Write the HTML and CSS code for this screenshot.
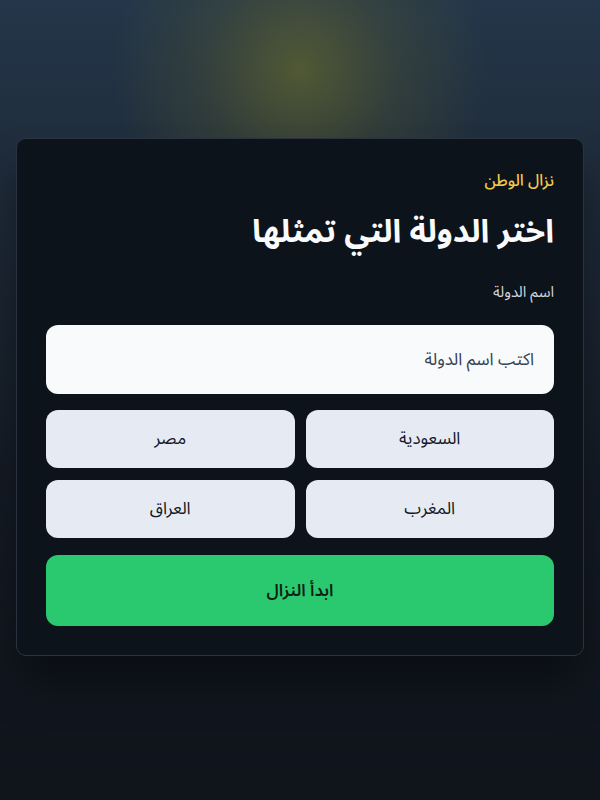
FILE: index.html
```html
<!DOCTYPE html>
<html lang="ar" dir="rtl">
<head>
  <meta charset="UTF-8">
  <title>نزال الوطن</title>
  <link rel="stylesheet" href="styles.css">
</head>
<body>
  <div class="glow"></div>

  <main class="card">
    <p class="eyebrow">نزال الوطن</p>
    <h1>اختر الدولة التي تمثلها</h1>

    <label for="country">اسم الدولة</label>
    <input type="text" id="country" placeholder="اكتب اسم الدولة">

    <div class="choices">
      <button class="choice">السعودية</button>
      <button class="choice">مصر</button>
      <button class="choice">المغرب</button>
      <button class="choice">العراق</button>
    </div>

    <button class="start">ابدأ النزال</button>
  </main>
</body>
</html>
```

FILE: styles.css
```css
* {
  box-sizing: border-box;
}

html {
  min-height: 100%;
  background: linear-gradient(180deg, #24364a 0%, #1e2a38 25%, #141b25 60%, #0f141b 100%);
}

body {
  font-family: "Noto Sans Arabic", "Noto Naskh Arabic", "Noto Sans", "DejaVu Sans", sans-serif;
  margin: 0;
  padding: 138px 16px 40px;
  min-height: 800px;
  color: #e5e7eb;
  position: relative;
}

/* soft light behind the card */
.glow {
  position: absolute;
  top: -120px;
  left: 50%;
  width: 380px;
  height: 380px;
  margin-left: -190px;
  background: radial-gradient(ellipse at center, rgba(120, 120, 40, 0.55) 0%, rgba(90, 95, 45, 0.3) 35%, rgba(40, 55, 60, 0) 70%);
  pointer-events: none;
}

.card {
  position: relative;
  background: #0d131b;
  border: 1px solid #2a333f;
  border-radius: 10px;
  padding: 29px;
  display: flex;
  flex-direction: column;
  box-shadow: 0 30px 40px rgba(0, 0, 0, 0.35);
}

.eyebrow {
  margin: 0 0 14px;
  font-size: 16px;
  line-height: 26px;
  font-weight: 500;
  color: #f2c94c;
}

h1 {
  margin: 0 0 25px;
  font-size: 32px;
  line-height: 48px;
  font-weight: 700;
  color: #f8fafc;
}

label {
  font-size: 15px;
  line-height: 22px;
  color: #d1d5db;
  margin-bottom: 22px;
}

input {
  height: 69px;
  border: none;
  border-radius: 12px;
  background: #f8fafc;
  padding: 0 20px;
  font-family: inherit;
  font-size: 17px;
  color: #1f2937;
}

input::placeholder {
  color: #374151;
}

.choices {
  display: grid;
  grid-template-columns: 1fr 1fr;
  gap: 12px 11px;
  margin-top: 16px;
}

.choice {
  height: 58px;
  border: none;
  border-radius: 12px;
  background: #e6ebf3;
  font-family: inherit;
  font-size: 17px;
  color: #111827;
  cursor: pointer;
}

.start {
  margin-top: 17px;
  height: 71px;
  border: none;
  border-radius: 12px;
  background: #2bc96f;
  font-family: inherit;
  font-size: 17px;
  font-weight: 600;
  color: #0f1f16;
  cursor: pointer;
}
```
